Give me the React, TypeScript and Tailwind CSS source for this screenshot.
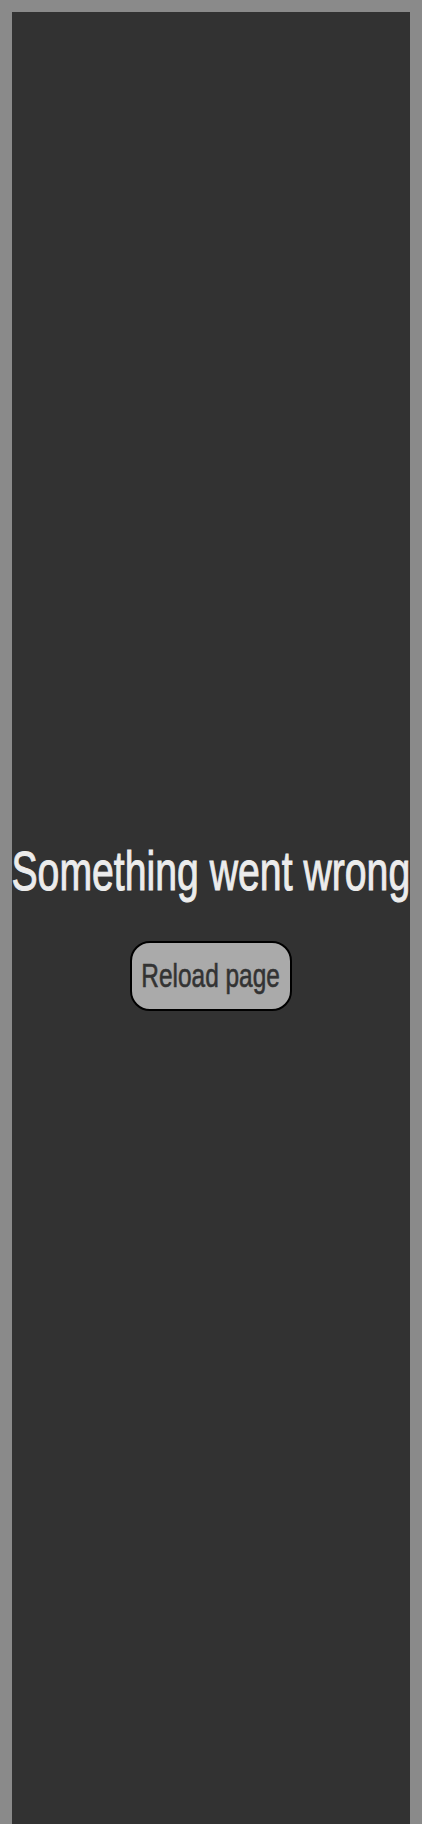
import React from "react";

export default function App() {
  return (
    <div className="min-h-screen bg-[#8a8a8a] px-3 pt-3 overflow-hidden">
      <div
        className="h-[1812px] bg-[#323232] flex flex-col items-center justify-center pt-[18px] overflow-hidden"
        style={{ fontFamily: '"Liberation Sans", Arial, sans-serif' }}
      >
        <h1 className="w-max shrink-0 text-[56px] leading-[56px] h-[56px] text-[#ececec] whitespace-nowrap scale-x-[0.7] [-webkit-text-stroke:1px_#ececec]">
          Something went wrong
        </h1>
        <button className="mt-[42px] w-[162px] h-[70px] rounded-[20px] border-2 border-black bg-[#aaaaaa] text-[#333333] text-[33px] flex items-center justify-center">
          <span className="w-max shrink-0 whitespace-nowrap scale-x-[0.74] [-webkit-text-stroke:0.6px_#333333]">Reload page</span>
        </button>
      </div>
    </div>
  );
}
